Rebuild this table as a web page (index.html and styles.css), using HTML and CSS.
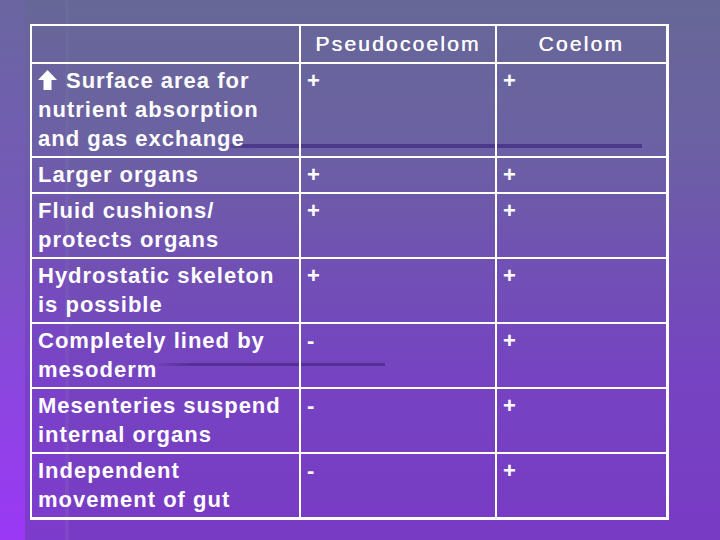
FILE: index.html
```html
<!DOCTYPE html>
<html>
<head>
<meta charset="utf-8">
<link rel="stylesheet" href="styles.css">
</head>
<body>
<div class="slide">
  <table class="cmp">
    <colgroup>
      <col class="c1"><col class="c2"><col class="c3">
    </colgroup>
    <tr class="head">
      <td></td>
      <td>Pseudocoelom</td>
      <td>Coelom</td>
    </tr>
    <tr>
      <td><svg class="arrow" viewBox="0 0 19 20" width="19" height="20"><path d="M9.5 0 L19 10 L13.5 10 L13.5 20 L5.5 20 L5.5 10 L0 10 Z" fill="#fff"/></svg>Surface area for<br>nutrient absorption<br>and gas exchange</td>
      <td>+</td>
      <td>+</td>
    </tr>
    <tr>
      <td>Larger organs</td>
      <td>+</td>
      <td>+</td>
    </tr>
    <tr>
      <td>Fluid cushions/<br>protects organs</td>
      <td>+</td>
      <td>+</td>
    </tr>
    <tr>
      <td>Hydrostatic skeleton<br>is possible</td>
      <td>+</td>
      <td>+</td>
    </tr>
    <tr>
      <td>Completely lined by<br>mesoderm</td>
      <td>-</td>
      <td>+</td>
    </tr>
    <tr>
      <td>Mesenteries suspend<br>internal organs</td>
      <td>-</td>
      <td>+</td>
    </tr>
    <tr>
      <td>Independent<br>movement of gut</td>
      <td>-</td>
      <td>+</td>
    </tr>
  </table>
</div>
</body>
</html>
```
FILE: styles.css
```css
html, body {
  margin: 0;
  padding: 0;
}
body {
  width: 720px;
  height: 540px;
  overflow: hidden;
}
.slide {
  width: 720px;
  height: 540px;
  box-sizing: border-box;
  padding: 24px 0 0 30px;
  font-family: "Liberation Sans", Arial, sans-serif;
  color: #fdfdfd;
  background:
    linear-gradient(to right, rgba(75,56,140,0), #4b3a8c 30px) 215px 144px / 427px 4px no-repeat,
    linear-gradient(to right, rgba(90,48,160,0), #553096 40px) 150px 363px / 235px 3px no-repeat,
    linear-gradient(to bottom, rgba(255,255,255,0.02), rgba(255,255,255,0.06)) 65px 0 / 4px 540px no-repeat,
    linear-gradient(to bottom, rgba(140,60,230,0), rgba(140,60,230,0.25)) 25px 0 / 40px 540px no-repeat,
    linear-gradient(to bottom, #6a66a0 0%, #7658bb 40%, #8d44e2 75%, #9b38f6 100%) 0 0 / 25px 540px no-repeat,
    linear-gradient(to bottom, #676797 0%, #6b62a2 25%, #7150b4 50%, #7643c2 70%, #783bc4 100%);
}
.cmp {
  border-collapse: collapse;
  table-layout: fixed;
  width: 637px;
  border-top: 2px solid #fff;
  border-left: 2px solid #fff;
  border-right: 3px solid #fff;
  border-bottom: 3px solid #fff;
}
.c1 { width: 269px; }
.c2 { width: 196px; }
.c3 { width: 171px; }
.cmp td {
  border: 2px solid #fff;
  padding: 2px 6px 3px;
  vertical-align: top;
  font-size: 22px;
  font-weight: bold;
  letter-spacing: 1px;
  line-height: 29px;
  white-space: nowrap;
}
.cmp .head td {
  font-size: 21px;
  font-weight: normal;
  letter-spacing: 2.2px;
  text-align: center;
  padding: 3px 6px 4px;
  text-shadow: 0.4px 0 0 #fdfdfd;
}
.arrow {
  display: inline-block;
  vertical-align: -2px;
  margin-right: 9px;
}
```
